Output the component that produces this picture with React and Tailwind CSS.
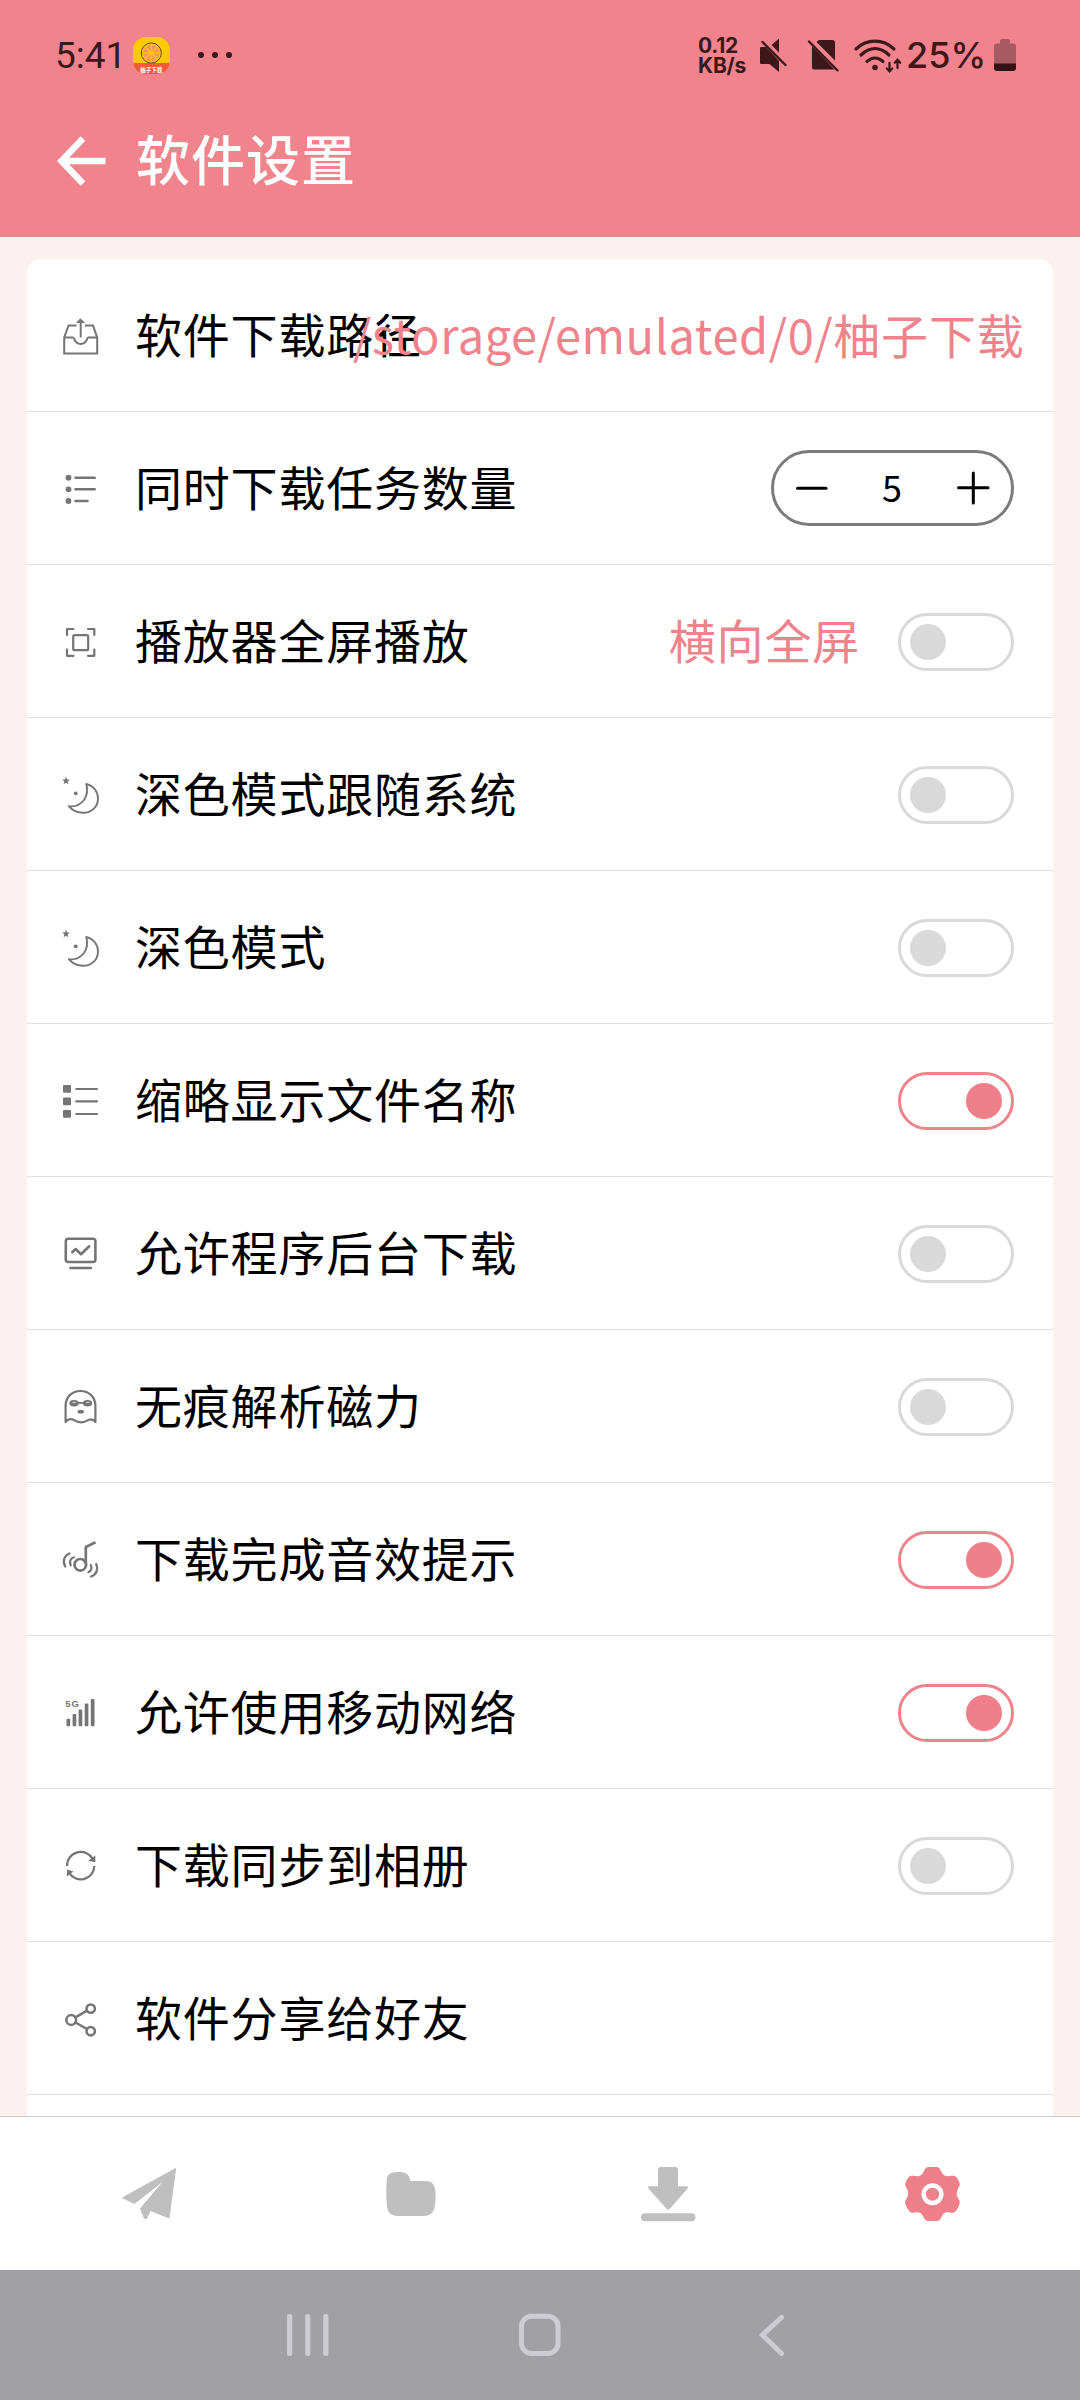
function Icon({ children }) {
  return (
    <svg
      className="w-12 h-12 shrink-0 text-[#757575]"
      viewBox="0 0 48 48"
      fill="none"
      stroke="currentColor"
      strokeWidth="2.2"
      strokeLinecap="round"
      strokeLinejoin="round"
    >
      {children}
    </svg>
  );
}

const TrayIcon = () => (
  <Icon>
    <g strokeWidth="2" strokeLinecap="butt" strokeLinejoin="miter">
      <path d="M20.4 14.4H12.6L8.2 26.4V42.6H41.2V26.4L37 14.4H29" />
      <path d="M8.2 26.4H17.2C18.6 26.4 18 33 24.7 33S30.8 26.4 32.2 26.4H41.2" />
      <path d="M24.7 10V26.5" />
    </g>
    <path d="M24.7 8L28.3 11.6H21.1Z" fill="currentColor" strokeWidth="1" />
  </Icon>
);

const ListIcon = () => (
  <Icon>
    <g fill="currentColor" stroke="none">
      <circle cx="12.5" cy="13.7" r="2.9" />
      <circle cx="12.5" cy="25.3" r="2.9" />
      <circle cx="12.5" cy="37" r="2.9" />
    </g>
    <path d="M19.5 13.7H38.7M19.5 25.3H38.7M19.5 37H31.5" strokeWidth="2.6" />
  </Icon>
);

const ScreenIcon = () => (
  <Icon>
    <path d="M11 18V12H17.5M32 12H38.3V18M38.3 32.5V38.8H32M17.5 38.8H11V32.5" />
    <rect x="17.2" y="18.2" width="15" height="15" rx="1.5" />
  </Icon>
);

const MoonIcon = () => (
  <Icon>
    <path
      d="M30.3 13.8C38 16 42 22 42 28.5C42 37 35.5 42.8 27 42.8C20.5 42.8 16 40 12.8 36.2C18 37 24 35 28 30C32 24.5 31.6 19 30.3 13.8Z"
      strokeWidth="1.9"
    />
    <g fill="currentColor" stroke="none">
      <path d="M10 6.8L11.1 9.4L13.8 9.6L11.7 11.5L12.4 14.2L10 12.8L7.6 14.2L8.3 11.5L6.2 9.6L8.9 9.4Z" />
      <circle cx="19.7" cy="23.3" r="1.9" />
    </g>
  </Icon>
);

const RowsIcon = () => (
  <Icon>
    <g fill="currentColor" stroke="none">
      <rect x="7" y="9" width="8" height="7.8" rx="1" />
      <rect x="7" y="21.5" width="8" height="7.8" rx="1" />
      <rect x="7" y="34" width="8" height="7.8" rx="1" />
    </g>
    <path d="M20.3 13H41M20.3 25.4H41M20.3 38H41" />
  </Icon>
);

const MonitorIcon = () => (
  <Icon>
    <g strokeWidth="2.6">
      <rect x="9.8" y="9.8" width="29.6" height="23.2" rx="2.5" />
      <path d="M16.3 23.3L19.7 20L25 25.2L33.2 17.3M14.5 39H35" />
    </g>
  </Icon>
);

const GhostIcon = () => (
  <Icon>
    <path d="M9.6 40V24C9.6 15 16 9 24.5 9S39.4 15 39.4 24V40C37.5 37.5 34.5 36.3 31 38.6C26.5 41.2 23 41.2 18.5 38.4C14.5 36 11.5 37.5 9.6 40Z" />
    <g fill="currentColor" stroke="none">
      <ellipse cx="18" cy="21.2" rx="4.6" ry="3.3" />
      <ellipse cx="31.5" cy="21.2" rx="4.6" ry="3.3" />
      <rect x="14" y="20" width="22" height="1.8" />
      <ellipse cx="24.7" cy="29.7" rx="3.2" ry="1.9" />
    </g>
    <path d="M17 20.4L19.6 20.4M30.5 20.4L33 20.4" stroke="#fff" strokeWidth="0.8" />
  </Icon>
);

const SoundIcon = () => (
  <Icon>
    <circle cx="24.3" cy="29.8" r="5.8" strokeWidth="2.7" />
    <path d="M29.8 29V12L39.5 7.2" strokeWidth="2.7" strokeLinecap="butt" />
    <path d="M13.5 18.5C8.5 20.5 6 26 9.3 31.5M18 22.3C14.3 23.5 13 26.5 14.8 30.3" />
    <path d="M40.2 29C42.5 34 40.5 39.8 35 41.5M34.8 30C36.3 33 35.3 36 32.3 37.2" />
  </Icon>
);

const SignalIcon = () => (
  <Icon>
    <text x="9.3" y="18.8" fill="currentColor" stroke="none" className="font-['Liberation_Sans'] font-bold text-[9.5px]">
      5G
    </text>
    <g fill="currentColor" stroke="none">
      <rect x="10.5" y="30.7" width="3.7" height="7.5" rx="1" />
      <rect x="16.6" y="26" width="3.7" height="12.2" rx="1" />
      <rect x="22.6" y="21.6" width="3.7" height="16.6" rx="1" />
      <rect x="28.7" y="15.6" width="3.7" height="22.6" rx="1" />
      <rect x="34.8" y="11" width="3.7" height="27.2" rx="1" />
    </g>
  </Icon>
);

const SyncIcon = () => (
  <Icon>
    <path d="M11.1 25A13.6 13.6 0 0 1 36.8 18.3M38.3 25A13.6 13.6 0 0 1 13.3 32.2" strokeLinecap="butt" />
    <path d="M39.3 14.6V21.2L32.3 19.7ZM10.8 35.6L11.1 28.6L17.5 30.6Z" fill="currentColor" stroke="none" />
  </Icon>
);

const ShareIcon = () => (
  <Icon>
    <g strokeWidth="2.5">
      <circle cx="15.2" cy="26" r="4.9" />
      <circle cx="34.7" cy="14.6" r="4.2" />
      <circle cx="34.7" cy="37.2" r="4.2" />
      <path d="M19.5 23.4L31 16.7M19.5 28.5L31 35" />
    </g>
  </Icon>
);

function Toggle({ on }) {
  return (
    <div
      className={`flex items-center w-[116px] h-[58px] rounded-full border-[3px] ${
        on ? 'justify-end border-[#ef838c] pr-[9px]' : 'justify-start border-[#d9d9d9] pl-[9px]'
      }`}
    >
      <div className={`w-9 h-9 rounded-full ${on ? 'bg-[#ef7f89]' : 'bg-[#d9d9d9]'}`} />
    </div>
  );
}

function Stepper({ value }) {
  return (
    <div className="flex items-center justify-between w-[243px] h-[76px] rounded-full border-[3px] border-[#7b7b7b] pl-[21px] pr-[21px]">
      <svg className="w-[34px] h-[34px]" viewBox="0 0 34 34" stroke="#000" strokeWidth="3" strokeLinecap="round">
        <path d="M2.5 17.3H31" />
      </svg>
      <span className="pb-[5px] text-[36px] leading-none">{value}</span>
      <svg className="w-[34px] h-[34px]" viewBox="0 0 34 34" stroke="#000" strokeWidth="3" strokeLinecap="round">
        <path d="M2.5 16.7H32M17.3 2V32" />
      </svg>
    </div>
  );
}

const settings = [
  { icon: TrayIcon, label: '软件下载路径', path: '/storage/emulated/0/', folder: '柚子下载' },
  { icon: ListIcon, label: '同时下载任务数量', count: 5 },
  { icon: ScreenIcon, label: '播放器全屏播放', note: '横向全屏', on: false },
  { icon: MoonIcon, label: '深色模式跟随系统', on: false },
  { icon: MoonIcon, label: '深色模式', on: false },
  { icon: RowsIcon, label: '缩略显示文件名称', on: true },
  { icon: MonitorIcon, label: '允许程序后台下载', on: false },
  { icon: GhostIcon, label: '无痕解析磁力', on: false },
  { icon: SoundIcon, label: '下载完成音效提示', on: true },
  { icon: SignalIcon, label: '允许使用移动网络', on: true },
  { icon: SyncIcon, label: '下载同步到相册', on: false },
  { icon: ShareIcon, label: '软件分享给好友' },
];

function SettingRow({ item }) {
  const RowIcon = item.icon;
  return (
    <div className="relative flex items-center h-[153px] border-b border-[#e0e0e0] pl-[29px] pr-[39px] text-[47px] leading-none tracking-[0.8px]">
      <RowIcon />
      <span className="ml-[31px] pb-[5px] whitespace-nowrap">{item.label}</span>
      {/* the path is long and runs over the label */}
      {item.path && (
        <span className="absolute right-[28.5px] pb-[3px] text-[#ef838c] whitespace-nowrap">
          <span className="tracking-[0.55px]">{item.path}</span>
          {item.folder}
        </span>
      )}
      <div className="ml-auto flex items-center gap-[38px]">
        {item.note && <span className="pb-[5px] text-[#ef838c]">{item.note}</span>}
        {item.count !== undefined && <Stepper value={item.count} />}
        {item.on !== undefined && (
          <div className="pt-0.5">
            <Toggle on={item.on} />
          </div>
        )}
      </div>
    </div>
  );
}

function StatusBar() {
  return (
    <div className="flex items-center h-[110px] pl-[55px] pr-16 text-[#3c181b] font-['Roboto']">
      <span className="text-[37px] leading-none w-[78px] whitespace-nowrap">5:41</span>
      <svg className="w-[37px] h-[37px]" viewBox="0 0 37 37">
        <defs>
          <clipPath id="badge">
            <rect width="37" height="37" rx="13" />
          </clipPath>
        </defs>
        <g clipPath="url(#badge)">
          <rect width="37" height="37" fill="#fcc902" />
          <rect y="26" width="37" height="11" fill="#f9573f" />
        </g>
        <circle cx="18.3" cy="16" r="10" fill="#f4975a" stroke="#5a3d14" strokeWidth="1" />
        <circle cx="18.3" cy="16" r="8.7" fill="none" stroke="#fbc40c" strokeWidth="1.4" />
        <path
          d="M18.3 8V24M10.3 16H26.3M12.6 10.3L24 21.7M24 10.3L12.6 21.7"
          stroke="#fbc40c"
          strokeWidth="1.3"
        />
        <text x="18.3" y="35" textAnchor="middle" fill="#fff" className="font-['Noto_Sans_CJK_SC'] font-bold text-[5.5px]">
          柚子下载
        </text>
      </svg>
      <div className="flex gap-2 ml-7">
        <span className="w-1.5 h-1.5 rounded-full bg-current" />
        <span className="w-1.5 h-1.5 rounded-full bg-current" />
        <span className="w-1.5 h-1.5 rounded-full bg-current" />
      </div>

      <div className="ml-auto flex items-center">
        <div className="w-[59px] pt-[2px] font-['Inter'] font-bold text-[21px] leading-[20px] tracking-[-0.2px]">
          <div>0.12</div>
          <div>KB/s</div>
        </div>
        <svg className="w-[30px] h-9" viewBox="0 0 30 36" fill="currentColor">
          <path d="M4.5 10H9L22 24V35L12.5 27H4.5C3.5 27 3 26.5 3 25.5V11.5C3 10.5 3.5 10 4.5 10Z" />
          <path d="M22 1.5V15.5L14.5 8Z" />
          <path d="M5.5 5L28.5 28" stroke="currentColor" strokeWidth="2.4" strokeLinecap="round" />
        </svg>
        <svg className="w-8 h-9 ml-[20px]" viewBox="0 0 32 36" fill="currentColor">
          <path d="M12 3H25.5C27 3 28 4 28 5.5V23.5L9.5 5Z" />
          <path d="M5 9L27.5 32.5H7C5.7 32.5 5 31.7 5 30.5Z" />
          <path d="M2 4.5L30.5 33.5" stroke="currentColor" strokeWidth="2.4" strokeLinecap="round" />
        </svg>
        <svg className="w-[50px] h-9 ml-[14px]" viewBox="0 0 50 36" fill="none" stroke="currentColor" strokeWidth="3.2" strokeLinecap="round">
          <path d="M3 12C14 1.5 30 1.5 41 12M8 18C17 9.5 27 9.5 36 18M14 24.5C19 20 25 20 30 24.5" />
          <circle cx="22" cy="30.5" r="2.8" fill="currentColor" stroke="none" />
          <path d="M36.5 26V34M33.8 31.5L36.5 34.3L39.2 31.5M44.5 31V23M41.8 25.7L44.5 22.8L47.2 25.7" strokeWidth="2.3" />
        </svg>
        <span className="w-[88px] ml-[3px] text-[36px] leading-none font-['Inter'] font-medium">25%</span>
        <svg className="w-[22px] h-8" viewBox="0 0 22 32">
          <path d="M6 2C6 .8 6.8 0 8 0H14C15.2 0 16 .8 16 2V4.5H19C21 4.5 22 5.5 22 7.5V25H0V7.5C0 5.5 1 4.5 3 4.5H6Z" fill="#a65a61" />
          <path d="M0 24.5H22V29C22 31 21 32 19 32H3C1 32 0 31 0 29Z" fill="#321214" />
        </svg>
      </div>
    </div>
  );
}

function TabBar() {
  return (
    <div className="grid grid-cols-4 place-items-center h-[154px] px-[18px] pt-px bg-white border-t border-[#c8c8c8] text-[#bfbfbf]">
      <svg className="w-[60px] h-[60px]" viewBox="0 0 60 60" fill="currentColor" stroke="currentColor" strokeWidth="1" strokeLinejoin="round">
        <path d="M56.6 4.5L3.5 33.8L15.5 39.5L46.5 15L21.5 44.5L25.5 54.5H27.5L31.5 46.5L50 54Z" />
      </svg>
      <svg className="w-[60px] h-[60px]" viewBox="1 0 60 60" fill="currentColor">
        <path d="M18 8C22 7.8 26 8 28.5 10.5C30.5 12.5 30.5 15 31.5 17H46C52.5 17 55.5 20 56.2 26C56.7 31 56.7 36 56 41C55 48 51.5 52 45 52H19C11.5 52 8.5 48 7.8 41C7.2 34 7.1 24 7.7 17C8 11.5 10 8 18 8Z" />
      </svg>
      <svg className="w-[60px] h-[60px]" viewBox="0.5 0 60 60" fill="currentColor">
        <path d="M20.5 3H34.5Q37.5 3 37.5 6V22.3H45.5Q49 22.3 46.8 25L29.5 44.5Q27.7 46.6 25.9 44.5L8.3 25Q6.2 22.3 9.5 22.3H17.5V6Q17.5 3 20.5 3Z" />
        <rect x="0.5" y="49.3" width="54.5" height="8" rx="4" />
      </svg>
      <svg className="w-[60px] h-[60px]" viewBox="0 0 60 60" fill="#ef7f89">
        <path d="M26.5 3H34.5C37.5 3 38.5 6 39.5 8C41.5 12 44 12.5 48 12C51 11.5 53.5 11.5 55 14C57 17 58.5 20 57.5 22C55 26 54 30 55.5 33C57 36 58.5 37 57.5 40C56.5 43 55 46 53 48C51 49.5 48 48.5 46 48.3C42.5 48 41 50 39.5 53C38.5 55 37.5 57 34.5 57H26.5C23.5 57 22.5 55 21.5 53C20 50 18.5 48 15 48.3C13 48.5 10 49.5 8 48C6 46 4.5 43 3.5 40C2.5 37 4 36 5.5 33C7 30 6 26 3.5 22C2.5 20 4 17 6 14C7.5 11.5 10 11.5 13 12C17 12.5 19.5 12 21.5 8C22.5 6 23.5 3 26.5 3Z" />
        <circle cx="30.5" cy="30.2" r="8.8" stroke="#fff" strokeWidth="4.5" />
      </svg>
    </div>
  );
}

function SystemNav() {
  return (
    <div className="grid grid-cols-3 place-items-center h-[130px] px-48 bg-[#a1a0a5] text-[#cdccd2]">
      <svg className="w-11 h-11" viewBox="0 0 44 44" fill="currentColor">
        <rect x="1" y="1" width="5.2" height="42" rx="2" />
        <rect x="19.2" y="1" width="5.2" height="42" rx="2" />
        <rect x="37.2" y="1" width="5.2" height="42" rx="2" />
      </svg>
      <svg className="w-11 h-11" viewBox="0 0 44 44" fill="none" stroke="currentColor" strokeWidth="5">
        <rect x="3.5" y="3.3" width="36.5" height="37.2" rx="10" />
      </svg>
      <svg className="w-11 h-11" viewBox="0 0 44 44" fill="none" stroke="currentColor" strokeWidth="5" strokeLinecap="round">
        <path d="M31.5 4.5L12.5 22L31.5 40.5" />
      </svg>
    </div>
  );
}

export default function App() {
  return (
    <div className="flex flex-col w-[1080px] h-[2400px] overflow-hidden bg-[#fcf1f0] font-['Noto_Sans_CJK_SC',sans-serif] text-black">
      {/* Header */}
      <header className="h-[237px] shrink-0 bg-[#f0838b] border-b border-[#d28d91]">
        <StatusBar />
        <div className="flex items-center h-[101px] pl-[55px] text-white">
          <svg className="w-[52px] h-[52px]" viewBox="0 0 52 52" fill="none" stroke="currentColor" strokeWidth="6.5">
            <path d="M28 3.5L6.5 26L28 48.5M6.5 26H50.5" />
          </svg>
          <h1 className="ml-[29px] pb-1.5 text-[54px] leading-none font-medium tracking-[1px]">软件设置</h1>
        </div>
      </header>

      {/* Settings list, cut off by the tab bar */}
      <main className="flex-1 min-h-0 overflow-hidden px-[27px] pt-[22px]">
        <div className="h-full bg-white rounded-t-[14px]">
          {settings.map(item => (
            <SettingRow key={item.label} item={item} />
          ))}
        </div>
      </main>

      <TabBar />
      <SystemNav />
    </div>
  );
}
